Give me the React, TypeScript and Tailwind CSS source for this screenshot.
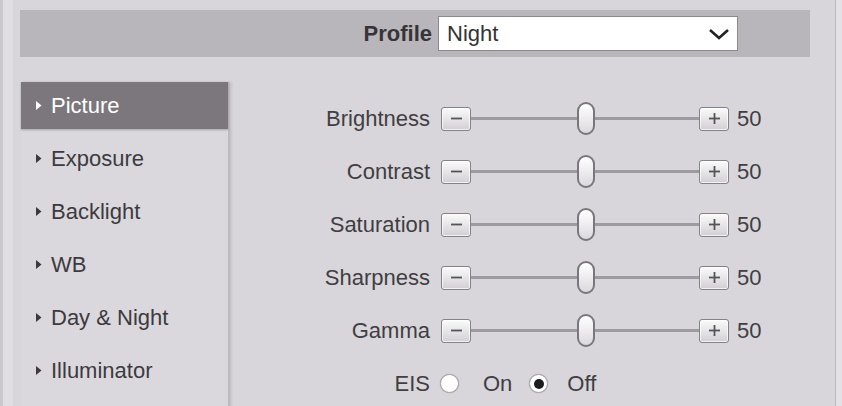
import React from "react";

const sliders = [
  { label: "Brightness", value: 50 },
  { label: "Contrast", value: 50 },
  { label: "Saturation", value: 50 },
  { label: "Sharpness", value: 50 },
  { label: "Gamma", value: 50 },
];

const menu = ["Picture", "Exposure", "Backlight", "WB", "Day & Night", "Illuminator"];

const TRACK = 229;
const THUMB = 18;

function Caret({ light }: { light?: boolean }) {
  return (
    <svg width="7" height="11" viewBox="0 0 7 11" className="shrink-0">
      <path d="M1 1 L6.5 5.5 L1 10 Z" fill={light ? "#ffffff" : "#3a3a3a"} />
    </svg>
  );
}

function StepButton({ plus }: { plus?: boolean }) {
  return (
    <div className="flex h-[24px] w-[30px] shrink-0 items-center justify-center rounded-[3px] border border-[#858287] bg-gradient-to-b from-[#fbfbfb] to-[#d2cfd4] shadow-[inset_0_0_0_1px_rgba(255,255,255,0.7)]">
      <svg width="13" height="13" viewBox="0 0 13 13">
        <path d="M1 6.5 H12" stroke="#555" strokeWidth="1.8" />
        {plus && <path d="M6.5 1 V12" stroke="#555" strokeWidth="1.8" />}
      </svg>
    </div>
  );
}

function SliderRow({ label, value }: { label: string; value: number }) {
  const left = (value / 100) * (TRACK - THUMB);
  return (
    <div className="flex h-[53px] shrink-0 items-center">
      <span className="w-[198px] text-right">{label}</span>
      <div className="ml-[11px]">
        <StepButton />
      </div>
      <div className="relative flex h-[33px] w-[228px] shrink-0 items-center">
        <div className="h-[3px] w-full bg-[#9e9ba0]" />
        <div
          className="absolute top-0 h-[33px] w-[18px] rounded-full border-2 border-[#7a777c] bg-gradient-to-b from-white to-[#dcd9de]"
          style={{ left }}
        />
      </div>
      <StepButton plus />
      <span className="ml-[8px]">{value}</span>
    </div>
  );
}

function Radio({ checked }: { checked?: boolean }) {
  return (
    <div className="flex h-[19px] w-[19px] items-center justify-center rounded-full border border-[#a9a6ab] bg-white shadow-[0_0_1px_rgba(0,0,0,0.3)]">
      {checked && <div className="h-[10px] w-[10px] rounded-full bg-[#1c1c1c]" />}
    </div>
  );
}

export default function App() {
  return (
    <div className="flex h-[406px] w-[842px] overflow-hidden bg-[#d9d6db] font-['Liberation_Sans',Arial,sans-serif] text-[22px] text-[#403e42]">
      <div className="w-[3px] shrink-0 bg-[#cbc8cd]" />
      <div className="w-[10px] shrink-0 bg-[#e1dee3]" />

      <div className="flex min-h-0 flex-1 flex-col overflow-hidden pl-[7px] pt-[10px]">
        {/* profile bar */}
        <div className="flex h-[47px] w-[790px] shrink-0 items-center justify-end bg-[#b9b6bb] pr-[72px]">
          <span className="mr-[6px] font-bold text-[#363438]">Profile</span>
          <div className="flex h-[35px] w-[300px] items-center justify-between border border-[#8d8a8f] bg-white pl-[8px] pr-[6px] text-[#333]">
            <span>Night</span>
            <svg width="24" height="14" viewBox="0 0 24 14">
              <path d="M3 3 L12 11 L21 3" fill="none" stroke="#222" strokeWidth="2.6" />
            </svg>
          </div>
        </div>

        <div className="flex flex-1">
          {/* side menu */}
          <div className="ml-[1px] mt-[25px] flex w-[209px] shrink-0 flex-col border-r-2 border-[#bdbabf] bg-[#dbd8dd] shadow-[2px_0_2px_rgba(0,0,0,0.08)]">
            {menu.map((item, i) => (
              <div
                key={item}
                className={
                  i === 0
                    ? "mb-[6px] flex h-[47px] shrink-0 items-center gap-[9px] bg-[#7b777d] pl-[14px] text-white shadow-[0_1px_2px_rgba(0,0,0,0.25)]"
                    : "mb-[6px] flex h-[47px] shrink-0 items-center gap-[9px] pl-[14px] text-[#3c3a3e]"
                }
              >
                <Caret light={i === 0} />
                <span>{item}</span>
              </div>
            ))}
          </div>

          {/* settings */}
          <div className="ml-[2px] flex flex-col pt-[35px]">
            {sliders.map((s) => (
              <SliderRow key={s.label} label={s.label} value={s.value} />
            ))}
            <div className="flex h-[53px] shrink-0 items-center">
              <span className="w-[198px] text-right">EIS</span>
              <div className="ml-[10px]">
                <Radio />
              </div>
              <span className="ml-[24px]">On</span>
              <div className="ml-[17px]">
                <Radio checked />
              </div>
              <span className="ml-[19px]">Off</span>
            </div>
          </div>
        </div>
      </div>

      <div className="w-px shrink-0 bg-[#bcb9be]" />
      <div className="w-[6px] shrink-0 bg-[#e4e1e6]" />
    </div>
  );
}
